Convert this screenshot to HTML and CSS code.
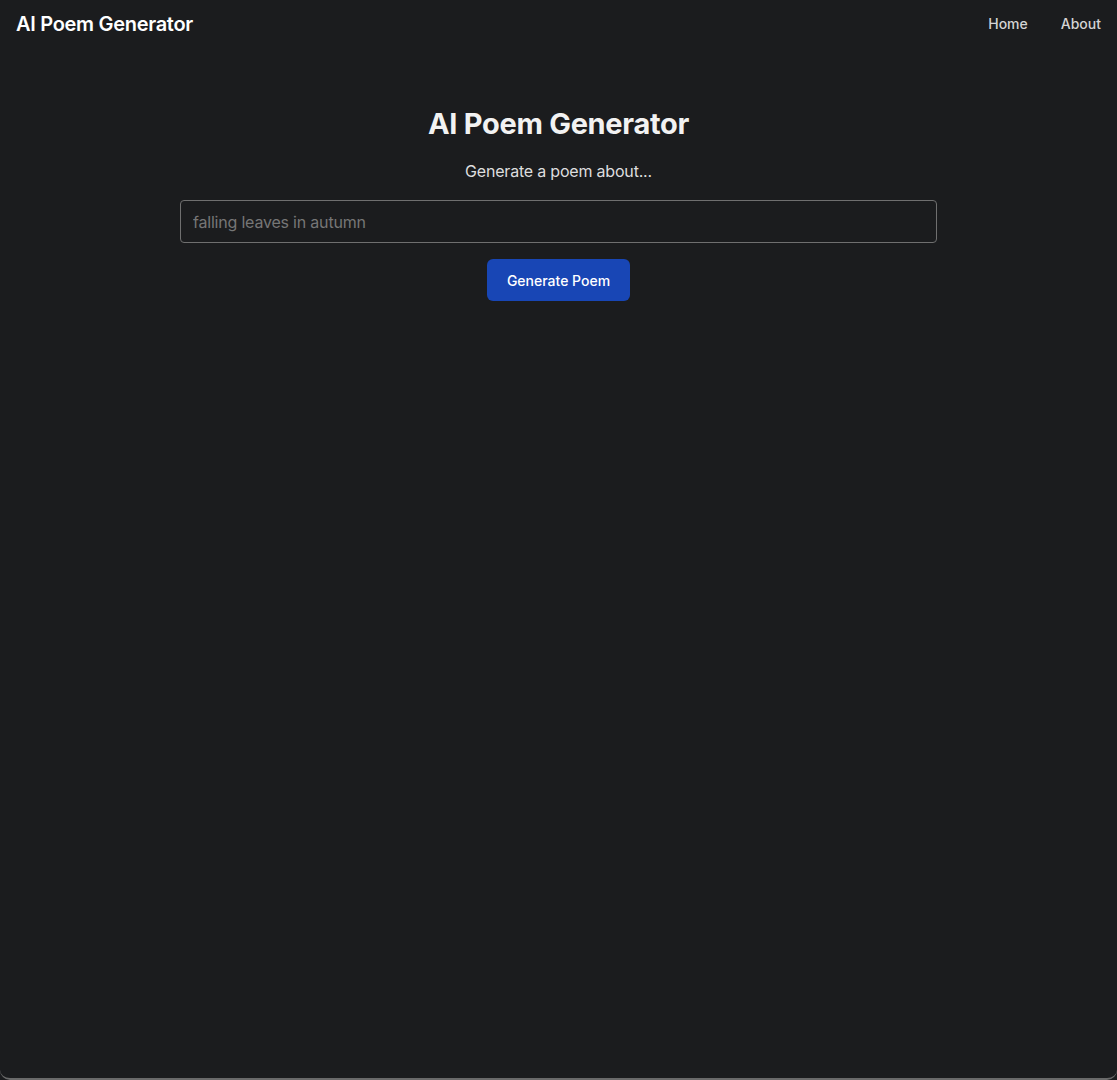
FILE: index.html
```html
<!DOCTYPE html>
<html lang="en">
<head>
  <meta charset="UTF-8">
  <meta name="viewport" content="width=device-width, initial-scale=1.0">
  <title>AI Poem Generator</title>
  <link rel="stylesheet" href="styles.css">
</head>
<body>

  <nav class="navbar">
    <a class="brand" href="#">AI Poem Generator</a>
    <div class="nav-links">
      <a href="#">Home</a>
      <a href="#">About</a>
    </div>
  </nav>

  <main class="container">
    <h1>AI Poem Generator</h1>
    <p class="subtitle">Generate a poem about...</p>
    <input type="text" id="topic" placeholder="falling leaves in autumn">
    <button id="generateButton">Generate Poem</button>
  </main>

</body>
</html>
```

FILE: styles.css
```css
html, body {
  height: 100%;
}

body {
  font-family: 'Inter', 'Noto Sans', sans-serif;
  background-color: #1b1c1e;
  color: #f2f2f2;
  margin: 0;
  padding: 0;
  box-sizing: border-box;
  border-bottom: 2px solid #6a6a6a;
  border-radius: 0 0 10px 10px;
}

.navbar {
  display: flex;
  justify-content: space-between;
  align-items: center;
  height: 47px;
  padding: 0 16px;
}

.brand {
  color: #fff;
  font-size: 20px;
  font-weight: 600;
  text-decoration: none;
  letter-spacing: -0.3px;
}

.nav-links {
  display: flex;
  gap: 33px;
}

.nav-links a {
  color: #d4d4d4;
  font-size: 14px;
  font-weight: 500;
  text-decoration: none;
}

.container {
  display: flex;
  flex-direction: column;
  align-items: center;
  width: 757px;
  margin: 0 auto;
  padding-top: 57px;
}

h1 {
  margin: 0;
  font-size: 29px;
  font-weight: 700;
  line-height: 40px;
  letter-spacing: -0.3px;
  color: #f2f2f2;
}

.subtitle {
  margin: 15px 0 17px;
  font-size: 16px;
  color: #dedede;
  line-height: 24px;
  letter-spacing: -0.2px;
}

input[type="text"] {
  width: 100%;
  height: 43px;
  box-sizing: border-box;
  padding: 0 12px;
  background-color: #1b1c1e;
  border: 1px solid #6f6f6f;
  border-radius: 4px;
  color: #eee;
  font-family: inherit;
  font-size: 16px;
  letter-spacing: -0.2px;
}

input[type="text"]::placeholder {
  color: #767676;
}

input[type="text"]:focus {
  outline: none;
  border-color: #1a47b8;
}

#generateButton {
  margin-top: 16px;
  width: 143px;
  height: 42px;
  background-color: #1846b5;
  color: #fff;
  border: none;
  border-radius: 6px;
  font-family: inherit;
  font-size: 14px;
  font-weight: 500;
  cursor: pointer;
}

#generateButton:hover {
  background-color: #143b99;
}
```
